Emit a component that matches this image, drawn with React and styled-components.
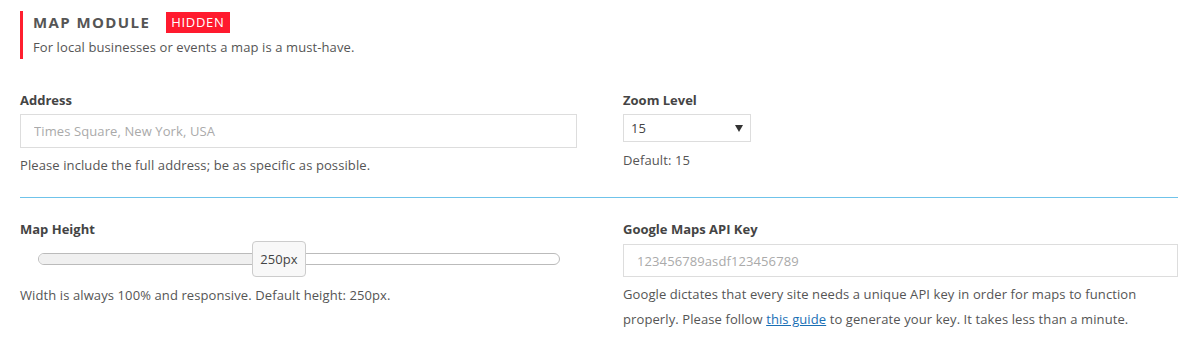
import styled, { createGlobalStyle } from "styled-components"

const GlobalStyle = createGlobalStyle`
  body {
    margin: 0;
    background: #fff;
    font-family: "Open Sans", "Liberation Sans", sans-serif;
    font-size: 13px;
    letter-spacing: 0.1px;
    color: #555;
  }
`

const Page = styled.div`
  width: 1188px;
  box-sizing: border-box;
  padding: 11px 10px 0 20px;
`

const Header = styled.div`
  border-left: 3px solid #ff1f2f;
  padding: 0 0 3px 10px;
`

const TitleRow = styled.div`
  display: flex;
  align-items: center;
  gap: 16px;
  height: 22px;
`

const Title = styled.h2`
  margin: 0;
  font-size: 15px;
  font-weight: 700;
  letter-spacing: 1.4px;
  color: #555;
`

const Badge = styled.span`
  background: #ff1a2e;
  color: #fff;
  font-size: 13px;
  letter-spacing: 0.7px;
  line-height: 21px;
  padding: 0 5px;
`

const Subtitle = styled.p`
  margin: 5px 0 0;
  line-height: 18px;
`

const Section = styled.div`
  display: grid;
  grid-template-columns: 557px 555px;
  column-gap: 46px;
  padding-top: ${p => p.$top}px;
  padding-bottom: ${p => p.$bottom}px;
  border-bottom: ${p => (p.$divider ? "1px solid #6fc3ea" : "none")};
`

const Field = styled.div`
  display: flex;
  flex-direction: column;
`

const Label = styled.label`
  font-weight: 700;
  color: #444;
  line-height: 18px;
  letter-spacing: 0;
`

const TextInput = styled.input`
  margin-top: ${p => p.$gap}px;
  height: ${p => p.$h}px;
  box-sizing: border-box;
  border: 1px solid #ddd;
  padding: 0 13px;
  font-family: inherit;
  font-size: 13px;
  letter-spacing: 0.1px;
  color: #555;
  &::placeholder {
    color: #aaa;
  }
`

const Help = styled.p`
  margin: ${p => p.$gap}px 0 0;
  line-height: ${p => p.$lh || 18}px;
`

const Link = styled.a`
  color: #1a6fb5;
  text-decoration: underline;
`

const SelectWrap = styled.div`
  position: relative;
  margin-top: 5px;
  width: 128px;
`

const Select = styled.select`
  appearance: none;
  width: 100%;
  height: 28px;
  border: 1px solid #ddd;
  background: #fff;
  padding: 0 7px;
  font-family: inherit;
  font-size: 13px;
  color: #444;
`

const Caret = styled.svg`
  position: absolute;
  right: 8px;
  top: 11px;
  pointer-events: none;
`

const Slider = styled.div`
  position: relative;
  margin: 3px 17px 0 18px;
  height: 36px;
  display: flex;
  align-items: center;
`

const Track = styled.div`
  flex: 1;
  height: 12px;
  box-sizing: border-box;
  border: 1px solid #bbb;
  border-radius: 6px;
  background: #fff;
  overflow: hidden;
`

const Fill = styled.div`
  height: 100%;
  background: #f0f0f0;
`

const Handle = styled.div`
  position: absolute;
  top: 0;
  width: 54px;
  height: 36px;
  box-sizing: border-box;
  border: 1px solid #ccc;
  border-radius: 4px;
  background: #f8f8f8;
  display: flex;
  align-items: center;
  justify-content: center;
  color: #444;
  font-size: 13px;
`

const RangeSlider = ({ value, min, max }) => {
  const pct = ((value - min) / (max - min)) * 100
  return (
    <Slider>
      <Track>
        <Fill style={{ width: `${pct}%` }} />
      </Track>
      <Handle style={{ left: `calc(${pct}% - 27px)` }}>{value}px</Handle>
    </Slider>
  )
}

export default function App() {
  return (
    <Page>
      <GlobalStyle />
      <Header>
        <TitleRow>
          <Title>MAP MODULE</Title>
          <Badge>HIDDEN</Badge>
        </TitleRow>
        <Subtitle>For local businesses or events a map is a must-have.</Subtitle>
      </Header>

      <Section $top={32} $bottom={23} $divider>
        <Field>
          <Label>Address</Label>
          <TextInput $gap={5} $h={34} placeholder="Times Square, New York, USA" />
          <Help $gap={8}>Please include the full address; be as specific as possible.</Help>
        </Field>
        <Field>
          <Label>Zoom Level</Label>
          <SelectWrap>
            <Select defaultValue="15">
              {Array.from({ length: 21 }, (_, i) => (
                <option key={i} value={String(i)}>{i}</option>
              ))}
            </Select>
            <Caret width="8" height="7" viewBox="0 0 8 7">
              <path d="M0 0h8L4 7z" fill="#333" />
            </Caret>
          </SelectWrap>
          <Help $gap={9}>Default: 15</Help>
        </Field>
      </Section>

      <Section $top={22} $bottom={10}>
        <Field>
          <Label>Map Height</Label>
          <RangeSlider value={250} min={100} max={425} />
          <Help $gap={9}>Width is always 100% and responsive. Default height: 250px.</Help>
        </Field>
        <Field>
          <Label>Google Maps API Key</Label>
          <TextInput $gap={6} $h={33} placeholder="123456789asdf123456789" />
          <Help $gap={5} $lh={25}>
            Google dictates that every site needs a unique API key in order for maps to function
            properly. Please follow <Link href="#">this guide</Link> to generate your key. It takes
            less than a minute.
          </Help>
        </Field>
      </Section>
    </Page>
  )
}
